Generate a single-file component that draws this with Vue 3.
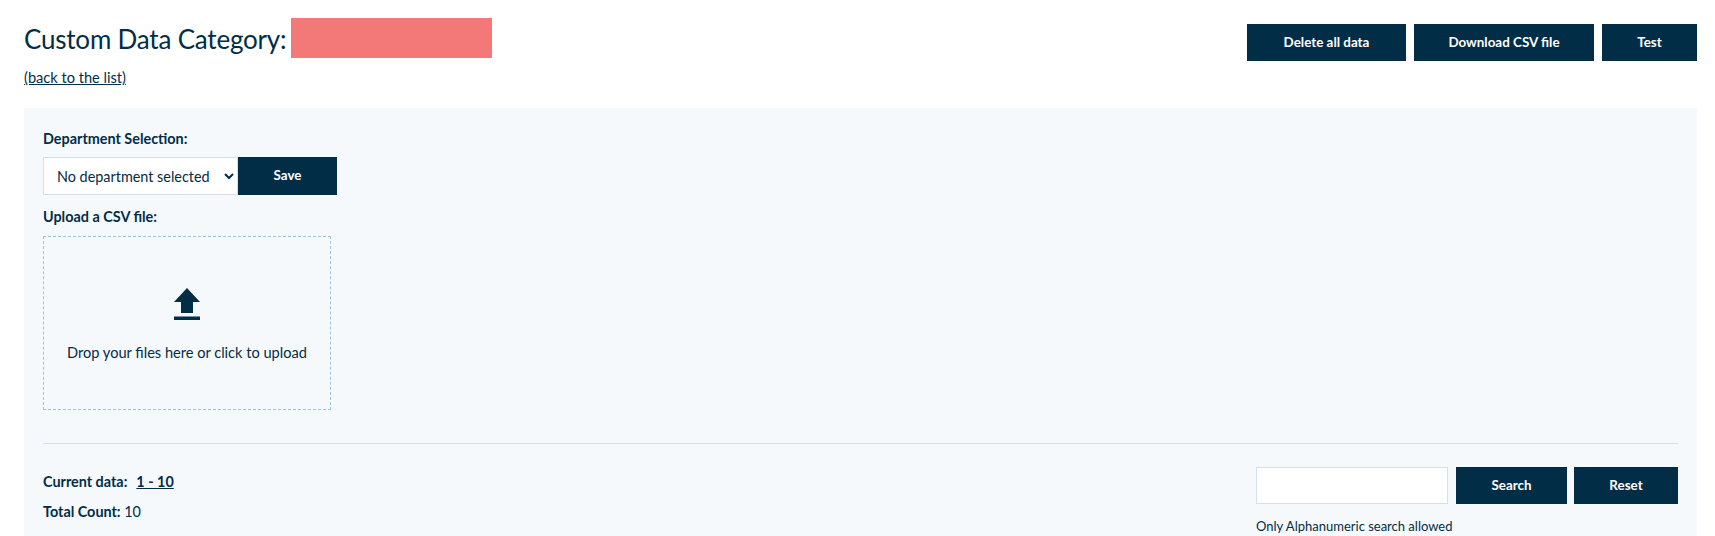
<template>
  <div class="page">
    <header class="top">
      <div class="heading">
        <div class="title-row">
          <h1 class="title">Custom Data Category:</h1>
          <span class="redacted"></span>
        </div>
        <a class="back" href="#">(back to the list)</a>
      </div>
      <div class="actions">
        <button class="btn btn-delete">Delete all data</button>
        <button class="btn btn-download">Download CSV file</button>
        <button class="btn btn-test">Test</button>
      </div>
    </header>

    <section class="panel">
      <label class="label dept-label">Department Selection:</label>
      <div class="dept-row">
        <select class="select">
          <option>No department selected</option>
        </select>
        <button class="btn btn-save">Save</button>
      </div>

      <label class="label upload-label">Upload a CSV file:</label>
      <div class="dropzone">
        <svg class="upload-icon" width="26" height="32" viewBox="0 0 26 32">
          <path d="M13 0 L26 14 H19 V25 H7 V14 H0 Z" fill="#022d46" />
          <rect x="0" y="28.5" width="26" height="3.5" fill="#022d46" />
        </svg>
        <span class="drop-text">Drop your files here or click to upload</span>
      </div>

      <hr class="divider" />

      <div class="bottom">
        <div class="counts">
          <div class="count-line">
            <strong>Current data:</strong>
            <a class="range" href="#">1 - 10</a>
          </div>
          <div class="count-line total"><strong>Total Count:</strong> {{ total }}</div>
        </div>
        <div class="search">
          <div class="search-row">
            <input class="search-input" type="text" />
            <button class="btn btn-search">Search</button>
            <button class="btn btn-reset">Reset</button>
          </div>
          <div class="hint">Only Alphanumeric search allowed</div>
        </div>
      </div>
    </section>
  </div>
</template>

<script setup>
const total = 10
</script>

<style>
html, body {
  margin: 0;
  background: #fff;
  overflow: hidden;
}
</style>

<style scoped>
.page {
  width: 1715px;
  height: 536px;
  padding: 0 18px 0 24px;
  box-sizing: border-box;
  overflow: hidden;
  font-family: "Lato", "Noto Sans", sans-serif;
  color: #022d46;
}

.top {
  display: flex;
  justify-content: space-between;
  height: 108px;
}
.title-row {
  display: flex;
  align-items: center;
  gap: 5px;
  padding-top: 18px;
}
.title {
  margin: 1px 0 0;
  height: 39px;
  font-size: 26px;
  letter-spacing: -0.2px;
  font-weight: 400;
  line-height: 40px;
}
.redacted {
  width: 201px;
  height: 40px;
  background: #f37979;
}
.back {
  display: block;
  margin-top: 10px;
  font-size: 14.6px;
  line-height: 20px;
  color: #022d46;
  text-decoration: underline;
}

.actions {
  display: flex;
  gap: 8px;
  padding-top: 24px;
}
.btn {
  height: 37px;
  border: 0;
  padding: 0 0 2px;
  background: #022d46;
  color: #fff;
  font-family: inherit;
  font-size: 13.4px;
  font-weight: 700;
}
.btn-delete { width: 159px; }
.btn-download { width: 180px; }
.btn-test { width: 95px; }

.panel {
  height: 428px;
  padding: 21px 19px 0;
  box-sizing: border-box;
  background: #f5f9fc;
}
.label {
  display: block;
  font-size: 14.4px;
  font-weight: 700;
  line-height: 20px;
}
.dept-row {
  display: flex;
  margin-top: 8px;
}
.select {
  width: 195px;
  height: 38px;
  box-sizing: border-box;
  padding-left: 9px;
  border: 1px solid #d3e1ec;
  border-radius: 0;
  background: #fff;
  color: #022d46;
  font-family: inherit;
  font-size: 14.4px;
}
.btn-save {
  width: 99px;
  height: 38px;
}
.upload-label {
  margin-top: 12px;
}
.dropzone {
  width: 288px;
  height: 174px;
  margin-top: 9px;
  box-sizing: border-box;
  border: 1px dashed #9cc5df;
  display: flex;
  flex-direction: column;
  align-items: center;
  padding-top: 51px;
}
.drop-text {
  margin-top: 23px;
  font-size: 14.6px;
  line-height: 20px;
}
.divider {
  margin: 33px 0 0;
  border: 0;
  border-top: 1px solid #d3e1ec;
}

.bottom {
  display: flex;
  justify-content: space-between;
  margin-top: 23px;
}
.counts {
  padding-top: 5px;
  font-size: 14.4px;
  line-height: 20px;
}
.count-line strong {
  font-weight: 700;
}
.total {
  margin-top: 10px;
}
.range {
  margin-left: 9px;
  font-weight: 700;
  color: #022d46;
  text-decoration: underline;
}
.search-row {
  display: flex;
}
.search-input {
  width: 192px;
  height: 37px;
  box-sizing: border-box;
  border: 1px solid #d3e1ec;
  background: #fff;
  outline: 0;
}
.btn-search {
  width: 111px;
  margin-left: 8px;
}
.btn-reset {
  width: 104px;
  margin-left: 7px;
}
.hint {
  margin-top: 14px;
  font-size: 13px;
  line-height: 16px;
}
</style>
